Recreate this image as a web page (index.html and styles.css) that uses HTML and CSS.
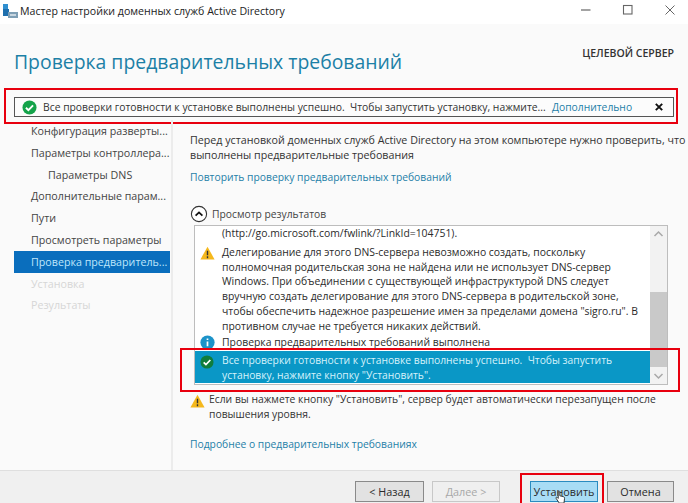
FILE: index.html
```html
<!DOCTYPE html>
<html lang="ru">
<head>
<meta charset="utf-8">
<title>Мастер настройки доменных служб Active Directory</title>
<link rel="stylesheet" href="styles.css">
</head>
<body>
<div class="window">
  <header class="titlebar">
    <svg class="app-icon" width="15" height="14" viewBox="0 0 15 14"><rect x="0" y="0" width="5" height="5" fill="#2f8fd0"/><rect x="0" y="5" width="6" height="7" fill="#1f6fae"/><rect x="5" y="8" width="10" height="6" fill="#7f9fb5"/><rect x="7" y="10" width="6" height="2" fill="#c8d6e0"/></svg>
    <span class="title-text">Мастер настройки доменных служб Active Directory</span>
    <div class="controls">
      <svg width="12" height="12" viewBox="0 0 12 12"><path d="M1 6h9.5" stroke="#666" stroke-width="1.2"/></svg>
      <svg width="12" height="12" viewBox="0 0 12 12"><rect x="1.5" y="1.5" width="8.5" height="8.5" fill="none" stroke="#666" stroke-width="1.1"/></svg>
      <svg width="12" height="12" viewBox="0 0 12 12"><path d="M1.5 1.5l9 9M10.5 1.5l-9 9" stroke="#666" stroke-width="1"/></svg>
    </div>
  </header>

  <div class="page-head">
    <h1>Проверка предварительных требований</h1>
    <div class="target">ЦЕЛЕВОЙ СЕРВЕР</div>
  </div>

  <div class="alert-frame">
    <div class="alert">
      <svg class="ico" width="15" height="15" viewBox="0 0 16 16"><circle cx="8" cy="8" r="7.5" fill="#14a34a"/><path d="M4.2 8.3l2.6 2.6 5-5.2" fill="none" stroke="#fff" stroke-width="2"/></svg>
      <span class="alert-text">Все проверки готовности к установке выполнены успешно.&nbsp; Чтобы запустить установку, нажмите...</span>
      <span class="link alert-more">Дополнительно</span>
      <svg class="alert-x" width="8" height="8" viewBox="0 0 8 8"><path d="M.8.8l6.4 6.4M7.2.8L.8 7.2" stroke="#111" stroke-width="1.9"/></svg>
    </div>
  </div>

  <div class="content">
    <nav class="nav">
      <div class="nav-item">Конфигурация разверты...</div>
      <div class="nav-item">Параметры контроллера...</div>
      <div class="nav-item sub">Параметры DNS</div>
      <div class="nav-item">Дополнительные парам...</div>
      <div class="nav-item">Пути</div>
      <div class="nav-item">Просмотреть параметры</div>
      <div class="nav-item active">Проверка предваритель...</div>
      <div class="nav-item off">Установка</div>
      <div class="nav-item off">Результаты</div>
    </nav>

    <main class="main">
      <p class="intro">Перед установкой доменных служб Active Directory на этом компьютере нужно проверить, что<br>выполнены предварительные требования</p>
      <div class="link recheck">Повторить проверку предварительных требований</div>

      <div class="results-head">
        <svg width="18" height="18" viewBox="0 0 18 18"><circle cx="9" cy="9" r="7.6" fill="#fff" stroke="#333" stroke-width="1.1"/><path d="M5.6 10.6L9 7.4l3.4 3.2" fill="none" stroke="#111" stroke-width="1.8"/></svg>
        <span>Просмотр результатов</span>
      </div>

      <div class="results">
        <div class="list">
          <div class="rows">
            <div class="row first"><span class="row-ico"></span><p>(http://go.microsoft.com/fwlink/?LinkId=104751).</p></div>
            <div class="row"><span class="row-ico">
              <svg width="15" height="14" viewBox="0 0 16 15"><path d="M8 .8L15.6 14.4H.4z" fill="#f5b81c"/><path d="M8 5v5M8 11v2" stroke="#333" stroke-width="1.5"/></svg>
            </span><p>Делегирование для этого DNS-сервера невозможно создать, поскольку<br>полномочная родительская зона не найдена или не использует DNS-сервер<br>Windows. При объединении с существующей инфраструктурой DNS следует<br>вручную создать делегирование для этого DNS-сервера в родительской зоне,<br>чтобы обеспечить надежное разрешение имен за пределами домена "sigro.ru". В<br>противном случае не требуется никаких действий.</p></div>
            <div class="row info"><span class="row-ico">
              <svg width="15" height="15" viewBox="0 0 16 16"><circle cx="8" cy="8" r="7.6" fill="#1c93c9"/><path d="M8 6.8v5.2M8 3.6v1.8" stroke="#fff" stroke-width="1.8"/></svg>
            </span><p>Проверка предварительных требований выполнена</p></div>
            <div class="row selected"><span class="row-ico">
              <svg width="14" height="14" viewBox="0 0 16 16"><circle cx="8" cy="8" r="7.5" fill="#0f7d3c"/><path d="M4.2 8.3l2.6 2.6 5-5.2" fill="none" stroke="#fff" stroke-width="2"/></svg>
            </span><p>Все проверки готовности к установке выполнены успешно.&nbsp; Чтобы запустить<br>установку, нажмите кнопку "Установить".</p></div>
          </div>
          <div class="scrollbar">
            <svg class="arrow" width="17" height="17" viewBox="0 0 17 17"><path d="M4.5 10L8.5 6l4 4" fill="none" stroke="#a8a8a8" stroke-width="1.5"/></svg>
            <div class="track"><div class="thumb"></div></div>
            <svg class="arrow" width="17" height="17" viewBox="0 0 17 17"><path d="M4.5 7l4 4 4-4" fill="none" stroke="#a8a8a8" stroke-width="1.5"/></svg>
          </div>
        </div>
        <div class="red-frame list-frame"></div>
      </div>

      <div class="warning">
        <svg width="15" height="14" viewBox="0 0 16 15"><path d="M8 .8L15.6 14.4H.4z" fill="#f5b81c"/><path d="M8 5v5M8 11v2" stroke="#333" stroke-width="1.5"/></svg>
        <p>Если вы нажмете кнопку "Установить", сервер будет автоматически перезапущен после<br>повышения уровня.</p>
      </div>
      <div class="link more">Подробнее о предварительных требованиях</div>
    </main>
  </div>

  <footer class="footer">
    <button class="btn back">&lt; Назад</button>
    <button class="btn disabled">Далее &gt;</button>
    <div class="install-wrap">
      <button class="btn primary">Установить</button>
      <div class="red-frame install-frame"></div>
      <svg class="cursor" width="11" height="14" viewBox="0 0 12 16"><path d="M3.5 1.2c.8-.6 1.7 0 1.7 1v4.4l4 1c1.1.3 1.6 1 1.4 2.1L10 15H4.6L1 9.6c-.6-1 .6-1.8 1.4-1l1 1V2.2z" fill="#fff" stroke="#222" stroke-width="1"/></svg>
    </div>
    <button class="btn cancel">Отмена</button>
  </footer>
</div>
</body>
</html>
```

FILE: styles.css
```css
* { box-sizing: border-box; }
html, body { margin: 0; padding: 0; }
body {
  width: 688px;
  height: 503px;
  overflow: hidden;
  background: #fafafa;
  color: #2e2e2e;
  font-family: "Open Sans", "Noto Sans", "Liberation Sans", sans-serif;
  font-size: 10.7px;
}
p { margin: 0; }
.window { display: flex; flex-direction: column; width: 688px; height: 503px; }

.titlebar { display: flex; align-items: center; height: 24px; background: #fff; padding: 0 0 2px 3px; flex: none; }
.app-icon { flex: none; margin-right: 2px; }
.title-text { font-size: 10.6px; color: #222; }
.controls { margin-left: auto; display: flex; gap: 30px; padding-right: 12px; margin-top: -2px; }

.page-head { display: flex; justify-content: space-between; height: 64px; flex: none; padding: 23px 14px 0 14px; }
h1 { margin: 0; font-size: 19.4px; font-weight: 400; line-height: 30px; color: #1c80a6; }
.target { font-size: 10.5px; font-weight: 600; color: #333; line-height: 30px; margin-top: -9px; }

.alert-frame { flex: none; margin-left: 4px; width: 674px; height: 36px; border: 2px solid #e8000e; padding: 7px 2px 3px 8px; background: #fafafa; }
.alert { display: flex; align-items: center; height: 20px; border: 1.5px solid #555; padding: 0 0 0 7px; background: #fcfcfc; }
.alert-text { margin-left: 6px; color: #333; white-space: nowrap; flex: none; width: 502px; font-size: 10.35px; }
.alert-more { margin-left: 7px; white-space: nowrap; }
.alert-x { margin-left: auto; margin-right: 10px; }
.link { color: #1e7fa8; font-size: 10.3px; }

.content { flex: 1; display: flex; min-height: 0; }
.nav { flex: none; width: 173px; padding: 0 1px 0 14px; margin-top: -4px; border-right: 2px solid #ececec; }
.nav-item { height: 21.8px; line-height: 22.8px; padding-left: 17px; white-space: nowrap; color: #444; font-size: 10.7px; }
.nav-item.sub { padding-left: 34px; }
.nav-item.active { background: #0a6ebd; color: #bfe6fb; }
.nav-item.off { color: #d6d6d6; }

.main { flex: 1; min-width: 0; padding: 9px 0 0 17px; position: relative; }
.intro { line-height: 15px; color: #333; white-space: nowrap; }
.recheck { margin-top: 6px; line-height: 16px; }
.results-head { display: flex; align-items: center; gap: 4px; height: 18px; margin-top: 20px; color: #444; font-size: 10.3px; }
.results { position: relative; margin-top: 2px; margin-left: 4px; width: 474px; }
.list { display: flex; height: 160px; border: 1px solid #bdbdbd; background: #fff; }
.rows { flex: 1; min-width: 0; display: flex; flex-direction: column; overflow: hidden; }
.row { display: flex; flex: none; gap: 4px; padding: 0 0 0 5px; line-height: 14.7px; color: #2b2b2b; font-size: 10.4px; white-space: nowrap; }
.row-ico { flex: none; width: 18px; padding-top: 1px; display: block; }
.row.first { height: 17px; }
.row + .row { margin-top: 2px; }
.row.info { height: 15px; }
.row.info .row-ico { padding-top: 0; }
.row.selected { position: relative; margin-top: 1px; height: 32px; background: #0a97c6; color: #d6f2fb; padding-top: 2px; font-size: 10.3px; }
.row.selected .row-ico { padding-top: 2px; }
.scrollbar { flex: none; width: 17px; display: flex; flex-direction: column; background: #f2f2f2; }
.arrow { flex: none; }
.track { flex: 1; display: flex; flex-direction: column; justify-content: flex-end; }
.thumb { height: 75px; background: #c9c9c9; }

.red-frame { position: absolute; border: 2px solid #e8000e; pointer-events: none; }
.list-frame { left: -14px; top: 123px; width: 500px; height: 44px; }

.warning { display: flex; gap: 4px; margin-top: 7px; line-height: 15px; color: #333; font-size: 10.35px; white-space: nowrap; }
.warning svg { flex: none; margin-top: 2px; }
.more { margin-top: 14px; line-height: 16px; }

.footer { flex: none; height: 33px; display: flex; align-items: flex-start; background: #f0f0f0; border-top: 1px solid #dfdfdf; padding: 10px 0 0 355px; }
.btn { width: 68px; height: 21px; padding: 0; border: 1px solid #8a8a8a; background: #e2e2e2; color: #2b2b2b; font: 10.8px "Open Sans", "Noto Sans", sans-serif; }
.back { width: 69px; }
.btn.disabled { margin-left: 8px; border-color: #c8c8c8; background: #efefef; color: #a8a8a8; }
.install-wrap { position: relative; margin-left: 30px; margin-right: 9px; }
.primary { display: block; background: #a8dcf5; border-color: #2a8bc0; }
.cancel { width: 67px; }
.install-frame { left: -10px; top: -8px; width: 84px; height: 33px; }
.cursor { position: absolute; left: 25px; top: 9px; }
```
